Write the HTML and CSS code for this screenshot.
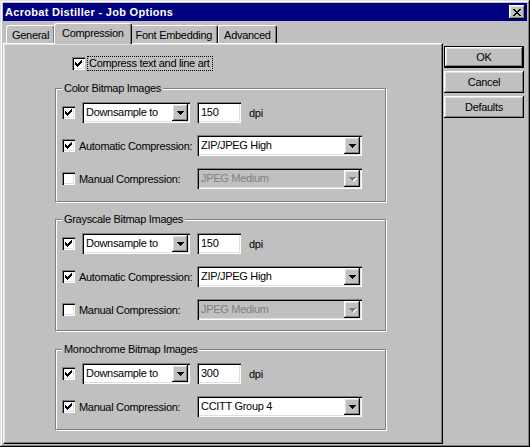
FILE: index.html
```html
<!DOCTYPE html>
<html>
<head>
<meta charset="utf-8">
<title>Acrobat Distiller - Job Options</title>
<link rel="stylesheet" href="styles.css">
</head>
<body>
<div class="window">
  <div class="titlebar">
    <span class="title">Acrobat Distiller - Job Options</span>
    <span class="close"><svg width="8" height="7" viewBox="0 0 8 7" shape-rendering="crispEdges"><path d="M0 0h2v1H0zM6 0h2v1H6zM1 1h2v1H1zM5 1h2v1H5zM2 2h4v1H2zM3 3h2v1H3zM2 4h4v1H2zM1 5h2v1H1zM5 5h2v1H5zM0 6h2v1H0zM6 6h2v1H6z"/></svg></span>
  </div>
  <div class="main">
    <div class="tabs-area">
      <div class="tabstrip">
        <div class="tab">General</div>
        <div class="tab selected">Compression</div>
        <div class="tab">Font Embedding</div>
        <div class="tab">Advanced</div>
      </div>
      <div class="panel">
        <div class="compress-row">
          <span class="check"><svg width="7" height="7" viewBox="0 0 7 7" shape-rendering="crispEdges"><path d="M6 0h1v1H6zM5 1h2v1H5zM0 2h1v1H0zM4 2h3v1H4zM0 3h2v1H0zM3 3h3v1H3zM0 4h5v1H0zM1 5h3v1H1zM2 6h1v1H2z"/></svg></span>
          <span class="focus-label">Compress text and line art</span>
        </div>

        <div class="group g1">
          <span class="group-title">Color Bitmap Images</span>
          <div class="row">
            <span class="check"><svg width="7" height="7" viewBox="0 0 7 7" shape-rendering="crispEdges"><path d="M6 0h1v1H6zM5 1h2v1H5zM0 2h1v1H0zM4 2h3v1H4zM0 3h2v1H0zM3 3h3v1H3zM0 4h5v1H0zM1 5h3v1H1zM2 6h1v1H2z"/></svg></span>
            <div class="combo combo-small"><span class="combo-text">Downsample to</span><span class="combo-btn"><svg width="7" height="4" viewBox="0 0 7 4" shape-rendering="crispEdges"><path d="M0 0h7v1H0zM1 1h5v1H1zM2 2h3v1H2zM3 3h1v1H3z"/></svg></span></div>
            <div class="field">150</div>
            <span class="unit">dpi</span>
          </div>
          <div class="row">
            <div class="row-label">
              <span class="check"><svg width="7" height="7" viewBox="0 0 7 7" shape-rendering="crispEdges"><path d="M6 0h1v1H6zM5 1h2v1H5zM0 2h1v1H0zM4 2h3v1H4zM0 3h2v1H0zM3 3h3v1H3zM0 4h5v1H0zM1 5h3v1H1zM2 6h1v1H2z"/></svg></span>
              <span class="label">Automatic Compression:</span>
            </div>
            <div class="combo combo-large"><span class="combo-text">ZIP/JPEG High</span><span class="combo-btn"><svg width="7" height="4" viewBox="0 0 7 4" shape-rendering="crispEdges"><path d="M0 0h7v1H0zM1 1h5v1H1zM2 2h3v1H2zM3 3h1v1H3z"/></svg></span></div>
          </div>
          <div class="row">
            <div class="row-label">
              <span class="check"></span>
              <span class="label">Manual Compression:</span>
            </div>
            <div class="combo combo-large disabled"><span class="combo-text">JPEG Medium</span><span class="combo-btn"><svg width="8" height="5" viewBox="0 0 8 5" shape-rendering="crispEdges"><path class="shadow" d="M1 1h7v1H1zM2 2h5v1H2zM3 3h3v1H3zM4 4h1v1H4z"/><path d="M0 0h7v1H0zM1 1h5v1H1zM2 2h3v1H2zM3 3h1v1H3z"/></svg></span></div>
          </div>
        </div>

        <div class="group g2">
          <span class="group-title">Grayscale Bitmap Images</span>
          <div class="row">
            <span class="check"><svg width="7" height="7" viewBox="0 0 7 7" shape-rendering="crispEdges"><path d="M6 0h1v1H6zM5 1h2v1H5zM0 2h1v1H0zM4 2h3v1H4zM0 3h2v1H0zM3 3h3v1H3zM0 4h5v1H0zM1 5h3v1H1zM2 6h1v1H2z"/></svg></span>
            <div class="combo combo-small"><span class="combo-text">Downsample to</span><span class="combo-btn"><svg width="7" height="4" viewBox="0 0 7 4" shape-rendering="crispEdges"><path d="M0 0h7v1H0zM1 1h5v1H1zM2 2h3v1H2zM3 3h1v1H3z"/></svg></span></div>
            <div class="field">150</div>
            <span class="unit">dpi</span>
          </div>
          <div class="row">
            <div class="row-label">
              <span class="check"><svg width="7" height="7" viewBox="0 0 7 7" shape-rendering="crispEdges"><path d="M6 0h1v1H6zM5 1h2v1H5zM0 2h1v1H0zM4 2h3v1H4zM0 3h2v1H0zM3 3h3v1H3zM0 4h5v1H0zM1 5h3v1H1zM2 6h1v1H2z"/></svg></span>
              <span class="label">Automatic Compression:</span>
            </div>
            <div class="combo combo-large"><span class="combo-text">ZIP/JPEG High</span><span class="combo-btn"><svg width="7" height="4" viewBox="0 0 7 4" shape-rendering="crispEdges"><path d="M0 0h7v1H0zM1 1h5v1H1zM2 2h3v1H2zM3 3h1v1H3z"/></svg></span></div>
          </div>
          <div class="row">
            <div class="row-label">
              <span class="check"></span>
              <span class="label">Manual Compression:</span>
            </div>
            <div class="combo combo-large disabled"><span class="combo-text">JPEG Medium</span><span class="combo-btn"><svg width="8" height="5" viewBox="0 0 8 5" shape-rendering="crispEdges"><path class="shadow" d="M1 1h7v1H1zM2 2h5v1H2zM3 3h3v1H3zM4 4h1v1H4z"/><path d="M0 0h7v1H0zM1 1h5v1H1zM2 2h3v1H2zM3 3h1v1H3z"/></svg></span></div>
          </div>
        </div>

        <div class="group g3">
          <span class="group-title">Monochrome Bitmap Images</span>
          <div class="row">
            <span class="check"><svg width="7" height="7" viewBox="0 0 7 7" shape-rendering="crispEdges"><path d="M6 0h1v1H6zM5 1h2v1H5zM0 2h1v1H0zM4 2h3v1H4zM0 3h2v1H0zM3 3h3v1H3zM0 4h5v1H0zM1 5h3v1H1zM2 6h1v1H2z"/></svg></span>
            <div class="combo combo-small"><span class="combo-text">Downsample to</span><span class="combo-btn"><svg width="7" height="4" viewBox="0 0 7 4" shape-rendering="crispEdges"><path d="M0 0h7v1H0zM1 1h5v1H1zM2 2h3v1H2zM3 3h1v1H3z"/></svg></span></div>
            <div class="field">300</div>
            <span class="unit">dpi</span>
          </div>
          <div class="row">
            <div class="row-label">
              <span class="check"><svg width="7" height="7" viewBox="0 0 7 7" shape-rendering="crispEdges"><path d="M6 0h1v1H6zM5 1h2v1H5zM0 2h1v1H0zM4 2h3v1H4zM0 3h2v1H0zM3 3h3v1H3zM0 4h5v1H0zM1 5h3v1H1zM2 6h1v1H2z"/></svg></span>
              <span class="label">Manual Compression:</span>
            </div>
            <div class="combo combo-large"><span class="combo-text">CCITT Group 4</span><span class="combo-btn"><svg width="7" height="4" viewBox="0 0 7 4" shape-rendering="crispEdges"><path d="M0 0h7v1H0zM1 1h5v1H1zM2 2h3v1H2zM3 3h1v1H3z"/></svg></span></div>
          </div>
        </div>
      </div>
    </div>
    <div class="buttons">
      <div class="btn default">OK</div>
      <div class="btn">Cancel</div>
      <div class="btn">Defaults</div>
    </div>
  </div>
</div>
</body>
</html>
```

FILE: styles.css
```css
* { box-sizing: border-box; }

html, body {
  margin: 0;
  padding: 0;
  background: #c0c0c0;
}

body {
  font-family: "Liberation Sans", Arial, sans-serif;
  font-size: 11px;
  letter-spacing: -0.3px;
  color: #000;
}

.window {
  width: 530px;
  height: 447px;
  padding: 3px;
  background: #c0c0c0;
  display: flex;
  flex-direction: column;
  box-shadow: inset -1px -1px #000, inset 1px 1px #dfdfdf, inset -2px -2px #808080, inset 2px 2px #fff;
}

.titlebar {
  height: 18px;
  background: #000080;
  display: flex;
  align-items: center;
  justify-content: space-between;
  padding: 0 2px 0 2px;
  flex: none;
}

.title {
  color: #fff;
  font-weight: bold;
  font-size: 11px;
  letter-spacing: 0.3px;
}

.close {
  width: 16px;
  height: 14px;
  background: #c0c0c0;
  display: flex;
  align-items: center;
  justify-content: center;
  padding-right: 1px;
  box-shadow: inset -1px -1px #000, inset 1px 1px #fff, inset -2px -2px #808080, inset 2px 2px #dfdfdf;
}

.close svg, .check svg, .combo-btn svg { display: block; fill: #000; }

.main {
  flex: 1;
  display: flex;
}

.tabs-area {
  width: 440px;
  display: flex;
  flex-direction: column;
}

.tabstrip {
  height: 22px;
  display: flex;
  align-items: flex-end;
  padding-left: 3px;
}

.tab {
  height: 18px;
  padding: 0 5px;
  display: flex;
  align-items: center;
  background: #c0c0c0;
  border-top: 1px solid #fff;
  border-left: 1px solid #fff;
  border-right: 1px solid #000;
  border-radius: 3px 3px 0 0;
  box-shadow: inset -1px 0 #808080;
  white-space: nowrap;
}

.tab.selected {
  height: 21px;
  margin: 0 -2px -1px -1px;
  padding: 0 7px 2px;
  position: relative;
  z-index: 1;
}

.panel {
  flex: 1;
  display: flex;
  flex-direction: column;
  padding: 12px 0 0 51px;
  border-top: 1px solid #fff;
  border-left: 1px solid #fff;
  border-right: 1px solid #000;
  border-bottom: 1px solid #000;
  box-shadow: inset -1px -1px #808080, inset 1px 1px #dfdfdf;
}

.compress-row {
  display: flex;
  align-items: center;
  height: 15px;
  margin-left: 17px;
}

.focus-label {
  margin-left: 3px;
  padding: 0 2px 0 1px;
  line-height: 13px;
  outline: 1px dotted #000;
  white-space: nowrap;
}

.check {
  width: 13px;
  height: 13px;
  flex: none;
  background: #fff;
  display: flex;
  align-items: center;
  justify-content: center;
  box-shadow: inset 1px 1px #808080, inset 2px 2px #000, inset -1px -1px #fff, inset -2px -2px #dfdfdf;
}

.group {
  width: 331px;
  border: 1px solid #808080;
  box-shadow: inset 1px 1px #fff, 1px 1px #fff;
  display: flex;
  flex-direction: column;
  gap: 12px;
  padding-left: 6px;
}

.g1 { height: 114px; margin-top: 17px; }
.g2 { height: 112px; margin-top: 17px; }
.g3 { height: 81px; margin-top: 18px; }

.group-title {
  align-self: flex-start;
  margin: -7px 0 -5px 0;
  padding: 0 2px;
  line-height: 13px;
  background: #c0c0c0;
  white-space: nowrap;
}

.row {
  height: 21px;
  display: flex;
  align-items: center;
}

.row > .check { margin-right: 7px; }

.row-label {
  width: 135px;
  flex: none;
  display: flex;
  align-items: center;
  gap: 4px;
  white-space: nowrap;
}

.combo {
  height: 21px;
  flex: none;
  display: flex;
  padding: 2px;
  background: #fff;
  box-shadow: inset 1px 1px #808080, inset 2px 2px #000, inset -1px -1px #fff, inset -2px -2px #dfdfdf;
}

.combo-small { width: 108px; }
.combo-large { width: 165px; }

.combo-text {
  flex: 1;
  padding-left: 2px;
  line-height: 17px;
  white-space: nowrap;
  overflow: hidden;
}

.combo-btn {
  width: 16px;
  height: 17px;
  background: #c0c0c0;
  display: flex;
  align-items: center;
  justify-content: center;
  box-shadow: inset -1px -1px #000, inset 1px 1px #fff, inset -2px -2px #808080, inset 2px 2px #dfdfdf;
}

.combo.disabled { background: #c0c0c0; }
.combo.disabled .combo-text { color: #808080; }
.combo.disabled .combo-btn svg { fill: #808080; margin-left: 1px; margin-top: 1px; }
.combo.disabled .combo-btn svg .shadow { fill: #fff; }

.field {
  width: 44px;
  height: 21px;
  flex: none;
  margin-left: 7px;
  padding: 2px 0 0 4px;
  line-height: 17px;
  background: #fff;
  box-shadow: inset 1px 1px #808080, inset 2px 2px #000, inset -1px -1px #fff, inset -2px -2px #dfdfdf;
}

.unit { margin-left: 8px; }

.buttons {
  width: 80px;
  margin: 25px 0 0 1px;
  display: flex;
  flex-direction: column;
  gap: 3px;
}

.btn {
  height: 22px;
  display: flex;
  align-items: center;
  justify-content: center;
  background: #c0c0c0;
  box-shadow: inset -1px -1px #000, inset 1px 1px #fff, inset -2px -2px #808080, inset 2px 2px #dfdfdf;
}

.btn.default {
  border: 1px solid #000;
}
```
